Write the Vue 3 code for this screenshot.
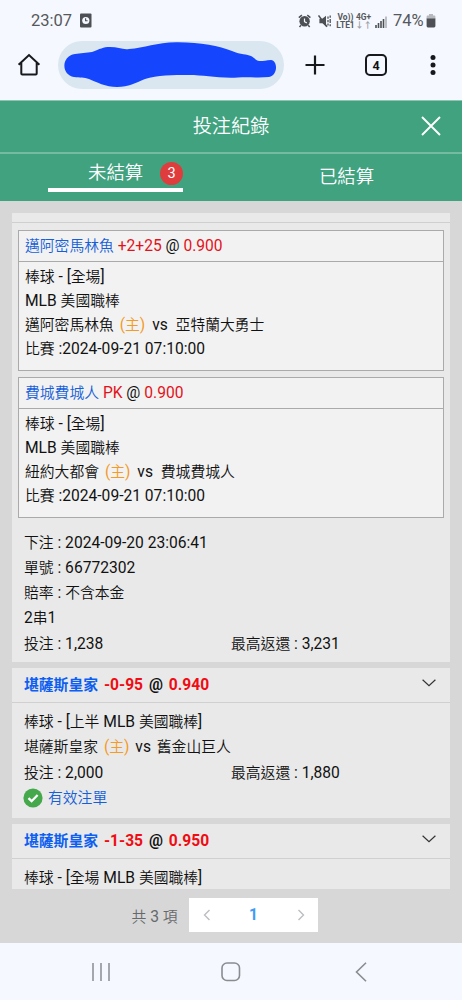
<template>
  <div class="phone">
    <div class="status">
      <span class="clock">23:07</span>
      <svg class="note" width="12" height="15" viewBox="0 0 12 15">
        <rect width="11.5" height="14" y=".5" rx="1" fill="#4d5054" />
        <circle cx="5.8" cy="7.5" r="3.6" fill="#f5f8fe" />
        <path d="M5.6 5.2v2.6h2" fill="none" stroke="#4d5054" stroke-width="1.1" />
      </svg>
      <svg class="alarm" width="14" height="14" viewBox="0 0 14 14">
        <circle cx="6.6" cy="7.3" r="5.2" fill="#4d5054" />
        <path d="M.8 3.7 3.9 1.2M9.3 1.2l3.1 2.5M3 11.2l-1.5 1.7M10.2 11.2l1.5 1.7" stroke="#4d5054" stroke-width="1.5" />
        <path d="M6.5 4.5v3.2l2.3 1.2" fill="none" stroke="#f5f8fe" stroke-width="1.2" />
      </svg>
      <svg class="mute" width="14" height="14" viewBox="0 0 14 14">
        <path d="M1.4 4.7h2.8L8 1.8v10.6L4.4 9.2h-3z" fill="#4d5054" />
        <path d="M.5 1.4 9 12.8" stroke="#4d5054" stroke-width="1.5" />
        <path d="M10 2.5v2.3M10 6v2.3M10 9.5v2M12.2 1.5v2.3M12.2 5v4M12.2 10.3v2" stroke="#4d5054" stroke-width="1.3" />
      </svg>
      <div class="net volte"><span>Vo))</span><span>LTE1</span></div>
      <div class="net data"><span>4G+</span><span class="arrows">↓↑</span></div>
      <svg class="signal" width="12" height="12" viewBox="0 0 12 12">
        <path d="M1 9v3M3.5 7v5M6 5v7M8.5 3v9" stroke="#4d5054" stroke-width="1.6" />
        <path d="M11 .5V12" stroke="#a9adb2" stroke-width="1.5" />
      </svg>
      <span class="percent">74%</span>
      <svg class="battery" width="10" height="14" viewBox="0 0 10 14">
        <path d="M3 0h4v1.6h1.4q1 0 1 1.1V5H.6V2.7q0-1.1 1-1.1H3z" fill="#b6babe" />
        <path d="M.6 4.6h8.8V12q0 1.4-1.3 1.4H1.9Q.6 13.4.6 12z" fill="#4d5054" />
      </svg>
    </div>

    <div class="browser">
      <svg class="home" width="24" height="24" viewBox="0 0 24 24">
        <path d="M1.6 11.8 12 2l10.4 9.8M4.3 10v10.6q0 1 1 1h13.4q1 0 1-1V10" fill="none" stroke="#17191c" stroke-width="2" />
      </svg>
      <div class="address">
        <svg width="226" height="48" viewBox="0 0 226 48">
          <path
            d="M17 13C22 12 29 12 34 11C42 8 45 6 52 6C60 6 65 9 71 8C86 7 99 1.5 118 1.3C141 1 161 5 174 10C183 14 189 13 193 15C197 17 197 19 201 20C206 20 208 19.5 213 19C220 20 220 34 211 36C202 37 191 36 180 36.5C160 37.5 146 34 131 34C115 34 99 34 87 38C77 42 71 46 59 46C48 46 38 41 31 38C26 36 22 37 16 36C3 34 3 15 17 13Z"
            fill="#1546fd"
          />
        </svg>
      </div>
      <svg class="plus" width="20" height="20" viewBox="0 0 20 20">
        <path d="M10 .5v19M.5 10h19" stroke="#17191c" stroke-width="2.2" />
      </svg>
      <span class="tab-count">4</span>
      <svg class="dots" width="6" height="20" viewBox="0 0 6 20">
        <circle v-for="cy in [2.6, 10, 17.4]" :key="cy" cx="3" :cy="cy" r="2.5" fill="#17191c" />
      </svg>
    </div>

    <header class="title">
      <span>投注紀錄</span>
      <svg class="close" width="20" height="20" viewBox="0 0 20 20">
        <path d="M1 1l18 18M19 1 1 19" stroke="#fff" stroke-width="1.9" />
      </svg>
    </header>
    <nav class="tabs">
      <div class="tab active"><span>未結算</span><i class="badge">3</i></div>
      <div class="tab"><span>已結算</span></div>
    </nav>

    <main class="records">
      <div class="list">
        <section class="card parlay">
          <div class="card-edge"></div>
          <div v-for="leg in legs" :key="leg.pick" class="leg">
            <div class="leg-head">
              <Mixed class="blue" :text="leg.pick" /> <span class="red">{{ leg.line }}</span> @ <span class="red">{{ leg.odds }}</span>
            </div>
            <div class="leg-body">
              <p><Mixed text="棒球 - [全場]" /></p>
              <p><Mixed text="MLB 美國職棒" /></p>
              <p><Mixed :text="leg.home" /> <Mixed class="host" text="(主)" /> vs <Mixed class="away" :text="leg.away" /></p>
              <p><Mixed text="比賽 :2024-09-21 07:10:00" /></p>
            </div>
          </div>
          <div class="info">
            <p><Mixed text="下注 : 2024-09-20 23:06:41" /></p>
            <p><Mixed text="單號 : 66772302" /></p>
            <p><Mixed text="賠率 : 不含本金" /></p>
            <p><Mixed text="2串1" /></p>
            <p class="money"><Mixed text="投注 : 1,238" /><Mixed text="最高返還 : 3,231" /></p>
          </div>
        </section>

        <section v-for="bet in bets" :key="bet.line" class="card">
          <div class="card-head">
            <div>
              <Mixed class="blue" :text="bet.pick" /> <span class="red">{{ bet.line }}</span> @ <span class="red">{{ bet.odds }}</span>
            </div>
            <svg class="chevron" width="14" height="8" viewBox="0 0 14 8">
              <path d="M.6.8 7 6.8 13.4.8" fill="none" stroke="#333" stroke-width="1.2" />
            </svg>
          </div>
          <div class="info">
            <p><Mixed :text="bet.league" /></p>
            <template v-if="bet.away">
              <p class="match"><Mixed :text="bet.pick" /> <Mixed class="host" text="(主)" /> vs <Mixed class="away" :text="bet.away" /></p>
              <p class="money"><Mixed :text="`投注 : ${bet.stake}`" /><Mixed :text="`最高返還 : ${bet.payout}`" /></p>
              <p class="valid">
                <svg width="20" height="20" viewBox="0 0 20 20">
                  <circle cx="10" cy="10" r="9.6" fill="#45a84b" />
                  <path d="m5.5 10.2 3.1 3L14.6 7" fill="none" stroke="#fff" stroke-width="2.3" />
                </svg>
                <Mixed text="有效注單" />
              </p>
            </template>
          </div>
        </section>
      </div>

      <footer class="pager">
        <Mixed class="total" text="共 3 項" />
        <div class="pages">
          <span>
            <svg width="8" height="12" viewBox="0 0 8 12"><path d="M6.5 1 1.5 6l5 5" fill="none" stroke="#bcbec2" stroke-width="1.4" /></svg>
          </span>
          <b>1</b>
          <span>
            <svg width="8" height="12" viewBox="0 0 8 12"><path d="m1.5 1 5 5-5 5" fill="none" stroke="#bcbec2" stroke-width="1.4" /></svg>
          </span>
        </div>
      </footer>
    </main>

    <div class="system">
      <svg width="18" height="18" viewBox="0 0 18 18">
        <path d="M1 0v18M9 0v18M17 0v18" stroke="#898d91" stroke-width="1.5" />
      </svg>
      <svg width="20" height="20" viewBox="0 0 20 20">
        <rect x="1" y="1" width="17.5" height="17.5" rx="5" fill="none" stroke="#898d91" stroke-width="1.6" />
      </svg>
      <svg width="12" height="20" viewBox="0 0 12 20">
        <path d="M11 .7 1.5 10l9.5 9.3" fill="none" stroke="#898d91" stroke-width="1.6" />
      </svg>
    </div>
  </div>
</template>

<script setup>
import { h, ref } from "vue";

// Chinese runs are set slightly smaller than the latin text and digits
const Mixed = (props) =>
  h(
    "span",
    props.text
      .split(/([\u4e00-\u9fff]+)/)
      .filter(Boolean)
      .map((part) => (/[\u4e00-\u9fff]/.test(part) ? h("span", { class: "zh" }, part) : part))
  );
Mixed.props = ["text"];

const legs = ref([
  { pick: "邁阿密馬林魚", line: "+2+25", odds: "0.900", home: "邁阿密馬林魚", away: "亞特蘭大勇士" },
  { pick: "費城費城人", line: "PK", odds: "0.900", home: "紐約大都會", away: "費城費城人" },
]);

const bets = ref([
  {
    pick: "堪薩斯皇家",
    line: "-0-95",
    odds: "0.940",
    league: "棒球 - [上半 MLB 美國職棒]",
    away: "舊金山巨人",
    stake: "2,000",
    payout: "1,880",
  },
  { pick: "堪薩斯皇家", line: "-1-35", odds: "0.950", league: "棒球 - [全場 MLB 美國職棒]" },
]);
</script>

<style>
body {
  margin: 0;
}

.zh {
  font-size: 14.8px;
  font-weight: 350;
}

.card-head .zh {
  font-weight: 700;
}
</style>

<style scoped>
.phone {
  width: 462px;
  height: 1000px;
  display: flex;
  flex-direction: column;
  overflow: hidden;
  background: #f5f8fe;
  color: #111;
  font: 15.6px Roboto, "Noto Sans CJK TC", sans-serif;
}

svg {
  display: block;
  flex: none;
}

p {
  margin: 0;
  white-space: nowrap;
}

.status {
  height: 41px;
  flex: none;
  display: flex;
  align-items: center;
  padding-left: 31px;
  color: #55585c;
}

.clock {
  width: 49px;
  font-size: 16.5px;
}

.alarm {
  margin-left: 206px;
}

.mute {
  margin-left: 6px;
}

.net {
  display: flex;
  flex-direction: column;
  align-items: center;
  font-size: 8.4px;
  line-height: 8px;
  font-weight: 700;
}

.volte {
  width: 17px;
  margin-left: 5px;
}

.data {
  width: 15px;
  margin-left: 2px;
}

.arrows {
  color: #9da1a5;
}

.signal {
  margin-left: 4px;
  margin-top: 2px;
}

.percent {
  margin-left: 6px;
  width: 32px;
  font-size: 16.5px;
}

.battery {
  margin-left: 1px;
}

.browser {
  height: 59px;
  flex: none;
  display: flex;
  align-items: flex-start;
}

.home {
  margin: 12px 0 0 17px;
}

.address {
  width: 226px;
  height: 48px;
  margin-left: 17px;
  border-radius: 24px;
  background: #dae7f0;
}

.plus {
  margin: 14px 0 0 21px;
}

.tab-count {
  box-sizing: border-box;
  width: 22px;
  height: 22px;
  margin: 13px 0 0 40px;
  border: 2px solid #17191c;
  border-radius: 5px;
  font-size: 12.5px;
  font-weight: 700;
  line-height: 19px;
  text-align: center;
}

.dots {
  margin: 14px 0 0 43px;
}

.title {
  box-sizing: border-box;
  position: relative;
  height: 52px;
  flex: none;
  display: flex;
  align-items: center;
  justify-content: center;
  padding-bottom: 4px;
  border-top: 1px solid #8fc5b0;
  background: #40a27f;
  color: #fff;
  font-size: 19.2px;
  font-weight: 350;
}

.close {
  position: absolute;
  right: 21px;
  top: 15px;
}

.tabs {
  box-sizing: border-box;
  height: 49px;
  flex: none;
  display: flex;
  border-top: 2px solid #74bba0;
  background: #40a27f;
  color: #fff;
  font-size: 18.4px;
  font-weight: 350;
}

.tab {
  box-sizing: border-box;
  width: 231px;
  display: flex;
  align-items: center;
  justify-content: center;
  padding-bottom: 5px;
  white-space: nowrap;
}

.active {
  width: 135px;
  height: 38px;
  margin: 0 48px;
  justify-content: flex-start;
  padding-left: 40px;
  padding-bottom: 0;
  border-bottom: 4px solid #fff;
}

.badge {
  width: 23px;
  height: 23px;
  flex: none;
  margin-left: 17px;
  margin-top: 4px;
  border-radius: 50%;
  background: #df3d3d;
  font-size: 14.5px;
  font-style: normal;
  font-weight: 400;
  line-height: 23px;
  text-align: center;
}

.records {
  height: 742px;
  box-sizing: border-box;
  flex: none;
  padding: 12px 12px 0;
  background: #d7d7d7;
}

.list {
  height: 676px;
  overflow: hidden;
}

.card {
  margin-bottom: 6px;
  background: #e9e9e9;
}

.parlay {
  height: 449px;
}

.card-edge {
  height: 9px;
  border-bottom: 1px solid #cfcfcf;
}

.leg {
  box-sizing: border-box;
  height: 141px;
  margin: 7px 6px 0;
  border: 1px solid #aaa;
  background: #f2f2f2;
}

.leg + .leg {
  margin-top: 6px;
}

.leg-head {
  height: 30px;
  padding-left: 6px;
  border-bottom: 1px solid #aaa;
  line-height: 31px;
}

.leg-body {
  padding: 3px 0 0 6px;
  line-height: 24px;
}

.leg-body p {
  height: 24px;
}

.blue {
  color: #165fd8;
}

.red {
  color: #e31119;
}

.host {
  margin: 0 3px 0 2px;
  color: #f49a26;
}

.away {
  margin-left: 4px;
}

.info {
  padding-left: 12px;
  line-height: 25.3px;
}

.info p {
  height: 25.3px;
}

.parlay .info {
  padding-top: 12.6px;
}

.card-head {
  box-sizing: border-box;
  height: 35px;
  display: flex;
  align-items: center;
  justify-content: space-between;
  padding: 0 14px 3px 12px;
  border-bottom: 1px solid #d0d0d0;
  font-weight: 700;
  word-spacing: 2px;
}

.card-head .blue {
  color: #0c5ff0;
}

.card-head .red {
  color: #f00c12;
}

.chevron {
  margin-bottom: 1px;
}

.card:not(.parlay) .info {
  height: 108px;
  padding-top: 7px;
}

.match .host {
  margin-right: 2px;
}

.match .away {
  margin-left: 2px;
}

.money span {
  display: inline-block;
}

.money > :first-child {
  width: 207px;
}

.valid {
  display: flex;
  align-items: center;
  gap: 5px;
  color: #165fd8;
}

.valid svg {
  margin-left: -1px;
  margin-top: -1px;
}

.pager {
  height: 34px;
  margin-top: 9px;
  display: flex;
  align-items: center;
}

.total {
  width: 57.5px;
  margin-left: 119.5px;
  color: #66696c;
  white-space: nowrap;
}

.pages {
  display: flex;
  height: 34px;
  background: #fff;
}

.pages > * {
  box-sizing: border-box;
  width: 43px;
  display: flex;
  align-items: center;
  justify-content: center;
}

.pages > :first-child {
  padding-right: 8px;
}

.pages > :last-child {
  padding-left: 8px;
}

.pages b {
  color: #429cf5;
}

.system {
  height: 57px;
  flex: none;
  display: flex;
  align-items: center;
  padding-left: 92px;
}

.system svg + svg {
  margin-left: 111px;
}

.system svg:last-child {
  margin-left: 114px;
}
</style>
